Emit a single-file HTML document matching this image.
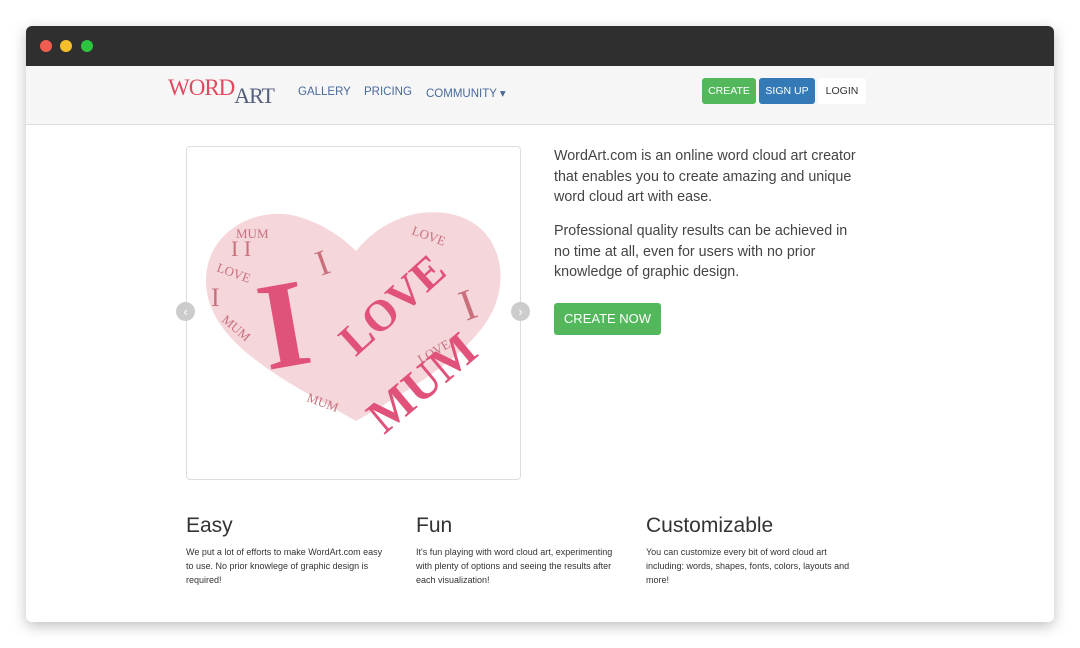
<!DOCTYPE html><html><head><style>
body{margin:0;background:#fff;font-family:"Liberation Sans",sans-serif;width:1080px;height:648px;overflow:hidden;position:relative}
.win{position:absolute;left:26px;top:26px;width:1028px;height:596px;border-radius:6px;background:#fff;box-shadow:0 4px 14px rgba(0,0,0,.25);overflow:hidden}
.tb{height:40px;background:#2f2f2f}
.dot{position:absolute;top:14px;width:12px;height:12px;border-radius:50%}
.nav{position:absolute;top:40px;left:0;right:0;height:58px;background:#f6f6f6;border-bottom:1px solid #ddd}
.a{position:absolute;top:20px;font-size:11.5px;color:#4a6a9a}
.btn{position:absolute;top:12px;height:26px;line-height:26px;font-size:10.5px;color:#fff;border-radius:3px;text-align:center}
.t{position:absolute;color:#444;font-size:14.3px;line-height:20.5px}
h3{position:absolute;margin:0;font-weight:normal;font-size:21px;color:#333}
.s{position:absolute;font-size:9px;line-height:14px;color:#333}
</style></head><body><div class="win">
<div class="tb"></div>
<div class="dot" style="left:14px;background:#f25d52"></div><div class="dot" style="left:34px;background:#f5bf2c"></div><div class="dot" style="left:55px;background:#2dc440"></div>
<div class="nav">
<div style="position:absolute;left:142px;top:9px;font-family:'Liberation Serif',serif;font-size:23px;color:#e04a5f;letter-spacing:-1px">WORD<span style="color:#555e7a;font-size:22px;position:relative;top:8px">ART</span></div>
<div class="a" style="left:272px;top:20px">GALLERY</div><div class="a" style="left:338px;top:20px">PRICING</div><div class="a" style="left:400px;top:20px">COMMUNITY ▾</div>
<div class="btn" style="left:676px;width:54px;background:#53b85c">CREATE</div>
<div class="btn" style="left:733px;width:56px;background:#337ab7">SIGN UP</div>
<div class="btn" style="left:792px;width:48px;background:#fff;color:#333">LOGIN</div>
</div>
<div style="position:absolute;left:160px;top:120px;width:333px;height:332px;border:1px solid #ddd;border-radius:4px"></div>
<svg style="position:absolute;left:150px;top:170px" width="360" height="240" viewBox="0 0 360 240">
<path d="M180 225 C120 190 30 150 30 85 C30 35 80 10 120 20 C150 28 170 45 180 55 C200 30 235 10 275 18 C320 28 330 70 322 100 C310 150 240 190 180 225Z" fill="#f4d6db"/>
<g font-family="Liberation Serif,serif" fill="#c9707c" font-size="13">
<text x="60" y="42">MUM</text><text x="40" y="75" transform="rotate(20 40 75)">LOVE</text><text x="45" y="125" transform="rotate(40 45 125)">MUM</text>
<text x="235" y="38" transform="rotate(20 235 38)">LOVE</text><text x="130" y="205" transform="rotate(20 130 205)">MUM</text><text x="245" y="168" transform="rotate(-30 245 168)">LOVE</text>
<text x="290" y="125" font-size="44" transform="rotate(-20 290 125)">I</text><text x="145" y="80" font-size="36" transform="rotate(-20 145 80)">I</text>
<text x="35" y="110" font-size="26">I</text><text x="55" y="60" font-size="22">I I</text>
</g>
<g font-family="Liberation Serif,serif" font-weight="bold" fill="#e0527a">
<text x="82" y="170" font-size="125" transform="rotate(-10 110 120)">I</text>
<text x="158" y="145" font-size="44" transform="rotate(-42 190 125)">LOVE</text>
<text x="172" y="210" font-size="48" transform="rotate(-40 230 175)">MUM</text>
</g></svg>
<div style="position:absolute;left:150px;top:276px;width:19px;height:19px;border-radius:50%;background:#ccc;color:#fff;font-size:13px;text-align:center;line-height:19px">‹</div>
<div style="position:absolute;left:485px;top:276px;width:19px;height:19px;border-radius:50%;background:#ccc;color:#fff;font-size:13px;text-align:center;line-height:19px">›</div>
<div class="t" style="left:528px;top:120px;width:312px">WordArt.com is an online word cloud art creator that enables you to create amazing and unique word cloud art with ease.</div>
<div class="t" style="left:528px;top:195px;width:305px">Professional quality results can be achieved in no time at all, even for users with no prior knowledge of graphic design.</div>
<div style="position:absolute;left:528px;top:277px;width:107px;height:32px;line-height:32px;background:#53b85c;color:#fff;font-size:13px;text-align:center;border-radius:3px">CREATE NOW</div>
<h3 style="left:160px;top:488px">Easy</h3><h3 style="left:390px;top:488px">Fun</h3><h3 style="left:620px;top:488px">Customizable</h3>
<div class="s" style="left:160px;top:519px;width:205px">We put a lot of efforts to make WordArt.com easy to use. No prior knowlege of graphic design is required!</div>
<div class="s" style="left:390px;top:519px;width:212px">It's fun playing with word cloud art, experimenting with plenty of options and seeing the results after each visualization!</div>
<div class="s" style="left:620px;top:519px;width:205px">You can customize every bit of word cloud art including: words, shapes, fonts, colors, layouts and more!</div>
</div></body></html>
